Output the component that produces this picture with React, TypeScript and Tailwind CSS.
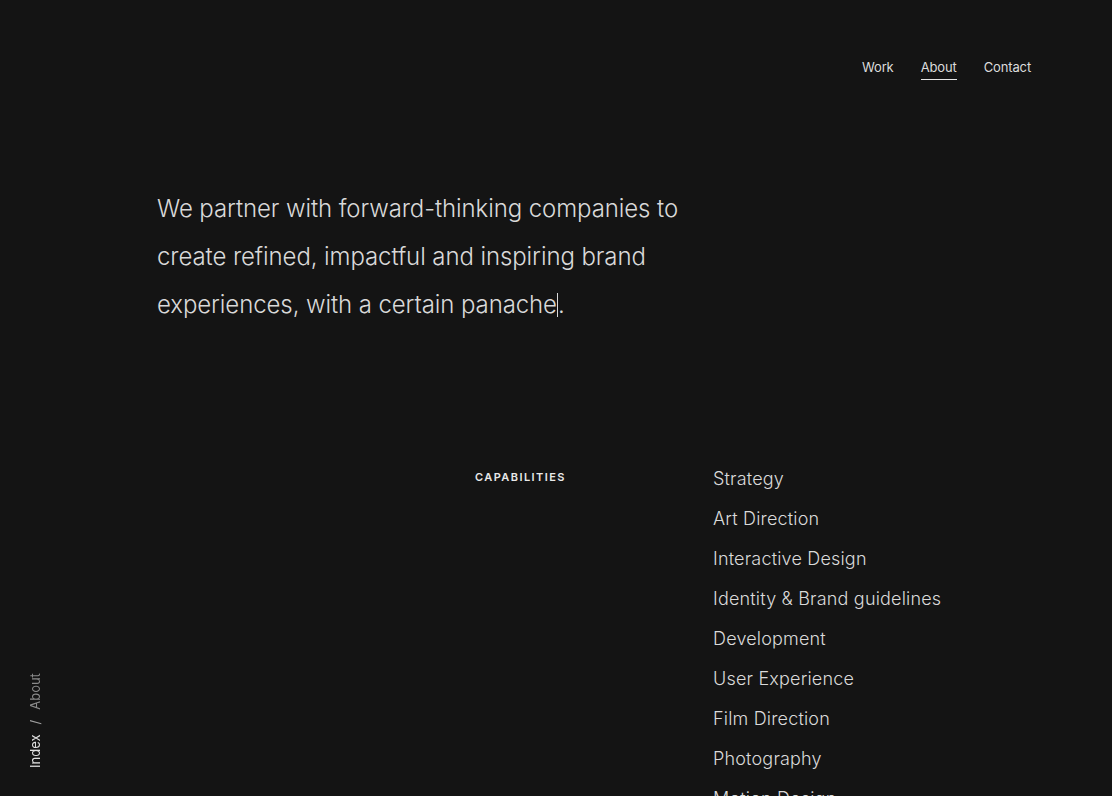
import React from 'react'

const capabilities = [
  'Strategy',
  'Art Direction',
  'Interactive Design',
  'Identity & Brand guidelines',
  'Development',
  'User Experience',
  'Film Direction',
  'Photography',
  'Motion Design',
]

export default function App() {
  return (
    <div className="relative min-h-screen bg-[#141414] text-[#e2e2e2] font-[Inter,sans-serif]">
      {/* top nav */}
      <header className="flex justify-end pt-[57px] pr-[81px]">
        <nav className="flex gap-[27px] text-[13px] leading-5 tracking-[-0.01em]">
          <a className="text-[#dcdcdc]">Work</a>
          <a className="text-[#dcdcdc] border-b border-[#e6e6e6] pb-[2px]">About</a>
          <a className="text-[#dcdcdc]">Contact</a>
        </nav>
      </header>

      {/* intro */}
      <section className="pl-[157px] pt-[105px]">
        <p className="max-w-[545px] text-[24px] leading-[48px] font-light text-[#d9d9d9] tracking-[-0.004em]">
          We partner with forward-thinking companies to create refined, impactful and inspiring brand
          experiences, with a certain panache
          <span className="inline-block w-px h-[24px] bg-[#d9d9d9] align-[-4px]" />.
        </p>
      </section>

      {/* capabilities */}
      <section className="grid grid-cols-[475px_238px_1fr] pt-[130px] pb-20">
        <div />
        <h2 className="pt-[10px] text-[11px] leading-4 font-semibold tracking-[0.13em] text-[#e8e8e8]">
          CAPABILITIES
        </h2>
        <ul className="text-[18px] leading-[40px] font-light tracking-[0.01em] text-[#dadada]">
          {capabilities.map((c) => (
            <li key={c}>{c}</li>
          ))}
        </ul>
      </section>

      {/* breadcrumb */}
      <div className="fixed left-[28px] top-[672px] h-[96px] w-[16px]">
        <div className="absolute left-0 bottom-0 origin-bottom-left -rotate-90 translate-x-[15px] whitespace-nowrap text-[13px] leading-4">
          <span className="text-[#e0e0e0]">Index</span>
          <span className="text-[#a0a0a0] mx-[10px]">/</span>
          <span className="text-[#8a8a8a]">About</span>
        </div>
      </div>
    </div>
  )
}
